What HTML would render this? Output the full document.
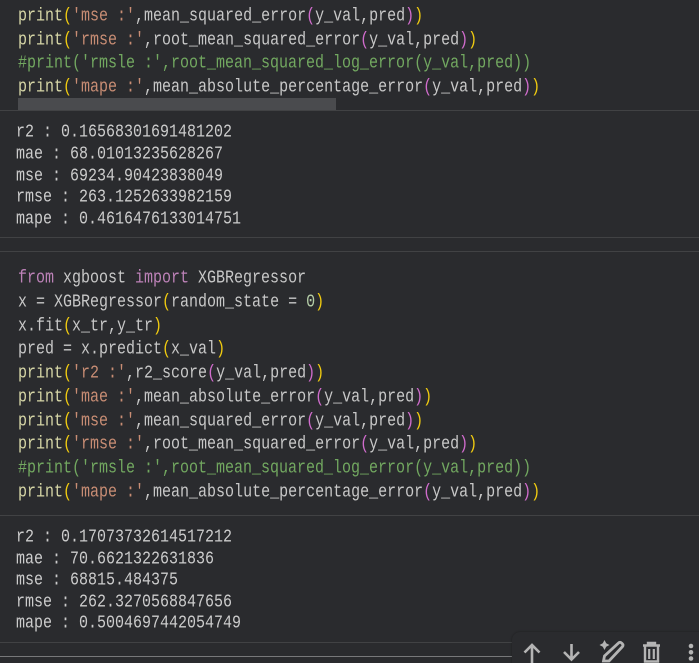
<!DOCTYPE html>
<html><head><meta charset="utf-8">
<style>
html,body{margin:0;padding:0;background:#2a2b2e;}
#p{position:relative;width:699px;height:663px;overflow:hidden;background:#2a2b2e;font-family:"Liberation Mono",monospace;font-size:15px;color:#c8c8c8;}
.l{position:absolute;white-space:pre;line-height:20px;height:20px;margin-top:2px;transform:scaleY(1.2);transform-origin:50% 55%;}
.c{left:18px}
.o{left:16px;color:#cccccc}
.h{position:absolute;left:0;right:0;height:1px;background:#414244}
.f{color:#d6d6a6}.s{color:#c88d74}.y{color:#f0cb10}.m{color:#d06ccc}.g{color:#72a860}.k{color:#bd82b8}.n{color:#b5cea8}
</style></head><body><div id="p">
<div class="l c" style="top:5px"><span class="f">print</span><span class="y">(</span><span class="s">'mse :'</span>,mean_squared_error<span class="m">(</span>y_val,pred<span class="m">)</span><span class="y">)</span></div>
<div class="l c" style="top:29px"><span class="f">print</span><span class="y">(</span><span class="s">'rmse :'</span>,root_mean_squared_error<span class="m">(</span>y_val,pred<span class="m">)</span><span class="y">)</span></div>
<div class="l c g" style="top:52px">#print('rmsle :',root_mean_squared_log_error(y_val,pred))</div>
<div class="l c" style="top:76px"><span class="f">print</span><span class="y">(</span><span class="s">'mape :'</span>,mean_absolute_percentage_error<span class="m">(</span>y_val,pred<span class="m">)</span><span class="y">)</span></div>
<div style="position:absolute;left:18px;top:98px;width:318px;height:12px;background:#4a4b4e"></div>
<div class="h" style="top:110px"></div>
<div class="l o" style="top:121px">r2 : 0.16568301691481202</div>
<div class="l o" style="top:143px">mae : 68.01013235628267</div>
<div class="l o" style="top:165px">mse : 69234.90423838049</div>
<div class="l o" style="top:186px">rmse : 263.1252633982159</div>
<div class="l o" style="top:208px">mape : 0.4616476133014751</div>
<div class="h" style="top:237px"></div>
<div class="h" style="top:251px"></div>
<div class="l c" style="top:267px"><span class="k">from</span> xgboost <span class="k">import</span> XGBRegressor</div>
<div class="l c" style="top:291px">x = XGBRegressor<span class="y">(</span>random_state = <span class="n">0</span><span class="y">)</span></div>
<div class="l c" style="top:315px">x.fit<span class="y">(</span>x_tr,y_tr<span class="y">)</span></div>
<div class="l c" style="top:338px">pred = x.predict<span class="y">(</span>x_val<span class="y">)</span></div>
<div class="l c" style="top:362px"><span class="f">print</span><span class="y">(</span><span class="s">'r2 :'</span>,r2_score<span class="m">(</span>y_val,pred<span class="m">)</span><span class="y">)</span></div>
<div class="l c" style="top:386px"><span class="f">print</span><span class="y">(</span><span class="s">'mae :'</span>,mean_absolute_error<span class="m">(</span>y_val,pred<span class="m">)</span><span class="y">)</span></div>
<div class="l c" style="top:410px"><span class="f">print</span><span class="y">(</span><span class="s">'mse :'</span>,mean_squared_error<span class="m">(</span>y_val,pred<span class="m">)</span><span class="y">)</span></div>
<div class="l c" style="top:433px"><span class="f">print</span><span class="y">(</span><span class="s">'rmse :'</span>,root_mean_squared_error<span class="m">(</span>y_val,pred<span class="m">)</span><span class="y">)</span></div>
<div class="l c g" style="top:457px">#print('rmsle :',root_mean_squared_log_error(y_val,pred))</div>
<div class="l c" style="top:481px"><span class="f">print</span><span class="y">(</span><span class="s">'mape :'</span>,mean_absolute_percentage_error<span class="m">(</span>y_val,pred<span class="m">)</span><span class="y">)</span></div>
<div class="h" style="top:515px"></div>
<div class="l o" style="top:526px">r2 : 0.17073732614517212</div>
<div class="l o" style="top:548px">mae : 70.6621322631836</div>
<div class="l o" style="top:569px">mse : 68815.484375</div>
<div class="l o" style="top:591px">rmse : 262.3270568847656</div>
<div class="l o" style="top:612px">mape : 0.5004697442054749</div>
<div class="h" style="top:642px"></div>
<div class="h" style="top:656px;background:#77787a"></div>
<div style="position:absolute;left:512px;top:632px;width:200px;height:40px;background:#2a2b2e;border-radius:8px 0 0 0;box-shadow:0 0 2px rgba(0,0,0,.35)"></div>
<svg style="position:absolute;left:512px;top:632px" width="187" height="31" viewBox="0 0 187 31" fill="none">
<path d="M20 31V13M12.500 20.500L20 13l7.500 7.500" stroke="#b4b4b4" stroke-width="2.600"/>
<path d="M59.500 12V27M52 20l7.500 7.500L67 20" stroke="#b4b4b4" stroke-width="2.600"/>
<path d="M91.500 29l1-5 14-13c1-1 2.200-1 3 0l.8.800c.9.900.9 2 0 3L97 29z" stroke="#b4b4b4" stroke-width="2.800"/>
<path d="M92.500 8l1.700 3.300L97.500 13l-3.300 1.700-1.700 3.300-1.700-3.300L87.500 13l3.300-1.700z" fill="#b4b4b4"/>
<path d="M131 13.500h17M136 13v-2h7v2M133 14V29.500h13V14" stroke="#b4b4b4" stroke-width="2.400"/>
<path d="M137.200 17v10M141.800 17v10" stroke="#b4b4b4" stroke-width="2.200"/>
<circle cx="179" cy="14" r="2.300" fill="#b4b4b4"/><circle cx="179" cy="20.300" r="2.300" fill="#b4b4b4"/><circle cx="179" cy="26.500" r="2.300" fill="#b4b4b4"/>
</svg>
</div></body></html>
